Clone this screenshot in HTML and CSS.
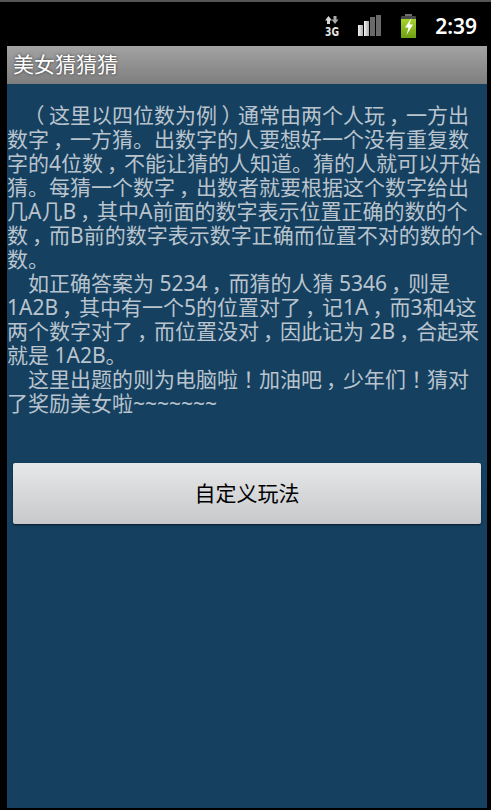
FILE: index.html
```html
<!DOCTYPE html>
<html lang="zh-CN">
<head>
    <meta charset="UTF-8">
    <meta name="viewport" content="width=device-width, initial-scale=1.0">
    <title>美女猜猜猜</title>
    <link rel="stylesheet" href="styles.css">
</head>
<body>
    <div class="status_bar">
        <svg class="icon_net" width="24" height="30" viewBox="-4 -2 24 30">
            <path d="M4.5 3 L8 7.5 H6 V11 H3 V7.5 H1 Z" fill="#d8d8d8"/>
            <path d="M11 11 L14.5 6.5 H12.5 V3 H9.5 V6.5 H7.5 Z" fill="#a8a8a8"/>
            <text x="1" y="23" class="net_text" textLength="14" lengthAdjust="spacingAndGlyphs">3G</text>
        </svg>
        <svg class="icon_signal" width="24" height="22" viewBox="0 0 24 22">
            <defs>
                <linearGradient id="bar_light" x1="0" y1="0" x2="1" y2="0">
                    <stop offset="0" stop-color="#f4f4f4"/>
                    <stop offset="1" stop-color="#a8a8a8"/>
                </linearGradient>
                <linearGradient id="bat_green" x1="0" y1="0" x2="0" y2="1">
                    <stop offset="0" stop-color="#a6d42c"/>
                    <stop offset="1" stop-color="#6f9f14"/>
                </linearGradient>
            </defs>
            <rect x="0" y="10" width="5" height="11" fill="url(#bar_light)"/>
            <rect x="6" y="6" width="5" height="15" fill="url(#bar_light)"/>
            <rect x="12" y="2" width="5" height="19" fill="#6a6a6a"/>
            <rect x="18" y="0" width="5" height="21" fill="#6a6a6a"/>
        </svg>
        <svg class="icon_battery" width="18" height="24" viewBox="0 0 18 24">
            <rect x="5" y="0" width="7" height="3" fill="#6e6e6e"/>
            <rect x="1" y="2" width="15" height="22" rx="1" fill="#4a4a4a"/>
            <rect x="1" y="5" width="15" height="19" fill="url(#bat_green)"/>
            <path d="M11.5 4 L5 13.5 H8.5 L6.5 21 L13 10.5 H9.5 Z" fill="#ffffff"/>
        </svg>
        <span class="time">2:39</span>
    </div>
    <div class="main">
        <div class="title_bar">美女猜猜猜</div>
        <div class="content">
            <p class="rules">　<span class="mark">（</span>这里以四位数为例<span class="mark">）</span>通常由两个人玩<span class="mark">，</span>一方出数字<span class="mark">，</span>一方猜。出数字的人要想好一个没有重复数字的4位数<span class="mark">，</span>不能让猜的人知道。猜的人就可以开始猜。每猜一个数字<span class="mark">，</span>出数者就要根据这个数字给出几A几B<span class="mark">，</span>其中A前面的数字表示位置正确的数的个数<span class="mark">，</span>而B前的数字表示数字正确而位置不对的数的个数。</p>
            <p class="rules">　如正确答案为 5234<span class="mark">，</span>而猜的人猜 5346<span class="mark">，</span>则是1A2B<span class="mark">，</span>其中有一个5的位置对了<span class="mark">，</span>记1A<span class="mark">，</span>而3和4这两个数字对了<span class="mark">，</span>而位置没对<span class="mark">，</span>因此记为 2B<span class="mark">，</span>合起来就是 1A2B。</p>
            <p class="rules">　这里出题的则为电脑啦<span class="mark">！</span>加油吧<span class="mark">，</span>少年们<span class="mark">！</span>猜对了奖励美女啦~~~~~~~</p>
            <button class="custom_btn">自定义玩法</button>
        </div>
    </div>
</body>
</html>
```

FILE: styles.css
```css
body {
    margin: 0;
    width: 491px;
    height: 810px;
    overflow: hidden;
    background: #000000;
    font-family: "Noto Sans", "Noto Sans CJK SC", sans-serif;
    display: flex;
    flex-direction: column;
}

.status_bar {
    height: 40px;
    padding-top: 4px;
    flex: none;
    border-top: 2px solid #555555;
    display: flex;
    align-items: center;
    justify-content: flex-end;
    padding-right: 14px;
    color: #ffffff;
}

.icon_net {
    margin-right: 14px;
}

.icon_signal {
    margin-right: 18px;
}

.icon_battery {
    margin-right: 17px;
}

.net_text {
    font-family: "DejaVu Sans", sans-serif;
    font-size: 13px;
    font-weight: 700;
    fill: #e4e4e4;
}

.time {
    font-size: 21px;
    font-weight: 600;
}

.main {
    flex: 1;
    margin: 0 4px 2px 7px;
    display: flex;
    flex-direction: column;
    background: #16405f;
}

.title_bar {
    height: 38px;
    flex: none;
    box-sizing: border-box;
    padding-left: 6px;
    line-height: 36px;
    font-size: 21px;
    color: #ffffff;
    text-shadow: 0 0 3px #333333;
    background: linear-gradient(to bottom, #a3a3a3, #7e7e7e);
}

.content {
    flex: 1;
    padding-top: 19px;
    display: flex;
    flex-direction: column;
}

.rules {
    margin: 0;
    font-size: 21px;
    line-height: 24px;
    color: #b9c4ce;
}

/* full width punctuation sits in the middle of its cell on this device */
.mark {
    display: inline-block;
    width: 21px;
    text-align: center;
    font-feature-settings: "palt";
}

.custom_btn {
    margin: 48px 6px 0 6px;
    height: 61px;
    padding: 0 0 4px 0;
    flex: none;
    border: none;
    border-radius: 2px;
    font-family: inherit;
    font-size: 21px;
    color: #000000;
    background: linear-gradient(to bottom, #e5e7e8, #c8c9cb);
    box-shadow: 0 1px 2px rgba(0, 0, 0, 0.6);
}
```
